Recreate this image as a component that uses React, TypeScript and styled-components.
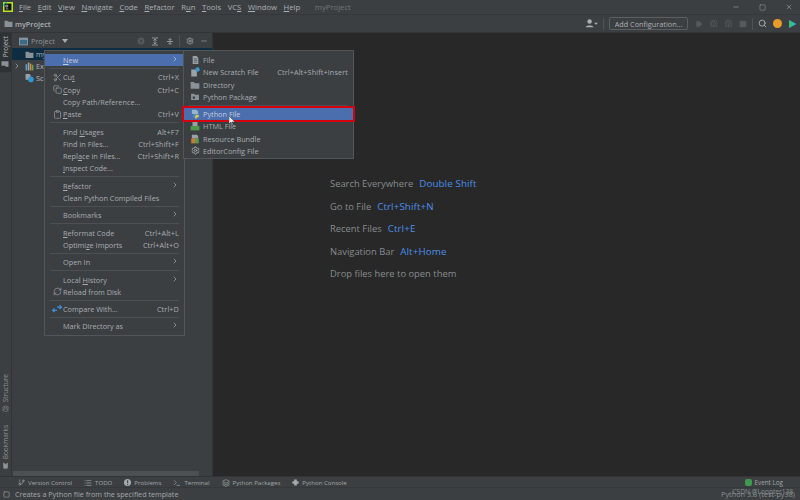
import React from 'react'
import styled, { createGlobalStyle } from 'styled-components'
import { Scissors, Copy, Clipboard, RefreshCw, ChevronRight, Search, X, Minus, Square, Play, Bug, Settings, List, Terminal, GitBranch, Layers, Bookmark } from 'lucide-react'

const Global = createGlobalStyle`
  html, body { margin: 0; padding: 0; background: #2b2b2b; }
  * { box-sizing: border-box; }
`

const Folder = ({ color = '#8a9197', size = 9 }: { color?: string; size?: number }) => (
  <svg width={size} height={size} viewBox="0 0 16 16"><path d="M1 3h5l2 2h7v9H1z" fill={color} /></svg>
)

const FileIcon = () => (
  <svg width="9" height="10" viewBox="0 0 16 16"><path d="M3 1h7l3 3v11H3z" fill="#9aa2a8" /><path d="M5 6h6M5 9h6M5 12h6" stroke="#3c3f41" /></svg>
)

const ScratchIcon = () => (
  <svg width="10" height="10" viewBox="0 0 16 16"><path d="M2 4h7l2 2v9H2z" fill="#9aa2a8" /><circle cx="12" cy="4" r="3.5" fill="#3b97d3" /></svg>
)

const PackageIcon = () => (
  <svg width="10" height="9" viewBox="0 0 16 16"><path d="M1 3h5l2 2h7v9H1z" fill="#8a9197" /><rect x="4" y="8" width="4" height="4" fill="#3c3f41" /></svg>
)

const PythonIcon = () => (
  <svg width="10" height="10" viewBox="0 0 16 16"><path d="M3 1h7l3 3v4H3z" fill="#9ab4c8" /><path d="M6 8h5v3H8v3H5v-4z" fill="#3d8fd1" /><path d="M9 9h5v4h-3v2H8v-3h1z" fill="#e8c545" /></svg>
)

const HtmlIcon = () => (
  <svg width="10" height="10" viewBox="0 0 16 16"><path d="M4 1h8v7H4z" fill="#9aa2a8" /><rect x="1" y="8" width="14" height="7" fill="#4f9a4a" /></svg>
)

const BundleIcon = () => (
  <svg width="10" height="10" viewBox="0 0 16 16"><path d="M3 1h8l2 2v4H3z" fill="#9aa2a8" /><rect x="2" y="7" width="6" height="8" fill="#c77b3a" /><rect x="8" y="7" width="6" height="8" fill="#5c9a4a" /></svg>
)

const CompareIcon = () => (
  <svg width="10" height="10" viewBox="0 0 16 16"><path d="M1 10h7M4 7l-3 3 3 3" stroke="#3f8fd6" strokeWidth="2" fill="none" /><path d="M8 5h7M12 2l3 3-3 3" stroke="#3f8fd6" strokeWidth="2" fill="none" /></svg>
)

const LogoIcon = () => (
  <svg width="10" height="10" viewBox="0 0 16 16">
    <rect width="16" height="16" fill="#b7e224" />
    <path d="M0 4L4 0h3L0 7z" fill="#21d789" />
    <rect x="2.500" y="2.500" width="11" height="11" fill="#111" />
    <path d="M4.500 5h3v3h-3zM4.500 11h4" stroke="#e6e6e6" fill="none" />
  </svg>
)

const PanelIcon = () => (
  <svg width="9" height="9" viewBox="0 0 16 16"><rect x="1" y="2" width="14" height="12" fill="#3d6a85" stroke="#8a9aa5" strokeWidth="1.600" /><rect x="1" y="2" width="14" height="3" fill="#8a9aa5" /></svg>
)

const LibraryIcon = () => (
  <svg width="9" height="9" viewBox="0 0 16 16"><rect x="1" y="4" width="3" height="11" fill="#5ea0c9" /><rect x="5" y="1" width="3" height="14" fill="#9aa2a8" /><rect x="9" y="3" width="2.500" height="12" fill="#c79a3a" /><rect x="12.500" y="5" width="2.500" height="10" fill="#6aa35a" /></svg>
)

const ScratchesIcon = () => (
  <svg width="9" height="10" viewBox="0 0 16 16"><path d="M1 1h7l2 2v8H1z" fill="#9aa2a8" /><circle cx="10.500" cy="10.500" r="5" fill="#2f96d4" /></svg>
)

const CloseCircle = () => (
  <svg width="8" height="8" viewBox="0 0 16 16"><circle cx="8" cy="8" r="7" fill="#55595b" /><path d="M5 5l6 6M11 5l-6 6" stroke="#3c3f41" strokeWidth="1.600" /></svg>
)

const ExpandIcon = () => (
  <svg width="8" height="9" viewBox="0 0 16 16"><path d="M2 1h12M2 15h12M8 4v8M5 6l3-3 3 3M5 10l3 3 3-3" stroke="#a4abb0" strokeWidth="1.600" fill="none" /></svg>
)

const CollapseIcon = () => (
  <svg width="8" height="9" viewBox="0 0 16 16"><path d="M2 8h12M8 1v4M8 11v4M5 3l3 3 3-3M5 13l3-3 3 3" stroke="#a4abb0" strokeWidth="1.600" fill="none" /></svg>
)

const Triangle = () => (
  <svg width="6" height="4" viewBox="0 0 6 4"><path d="M0 0h6L3 4z" fill="#a4abb0" /></svg>
)

const ProblemIcon = () => (
  <svg width="7" height="7" viewBox="0 0 16 16"><circle cx="8" cy="8" r="8" fill="#a4abb0" /><rect x="7" y="3" width="2.500" height="6" fill="#3c3f41" /><rect x="7" y="11" width="2.500" height="2.500" fill="#3c3f41" /></svg>
)

const ConsoleIcon = () => (
  <svg width="7" height="7" viewBox="0 0 16 16"><path d="M5 1h6v4h4v6h-4v4H5v-4H1V5h4z" fill="#a4abb0" /></svg>
)

const Root = styled.div`
  position: relative;
  width: 800px;
  height: 500px;
  overflow: hidden;
  display: flex;
  flex-direction: column;
  background: #3c3f41;
  color: #a4abb0;
  font-family: "Open Sans", "Noto Sans", sans-serif;
  font-size: 7.3px;
`
const TitleBar = styled.div`
  height: 15px;
  flex: none;
  display: flex;
  align-items: center;
  padding-left: 3px;
  border-bottom: 1px solid #35383a;
`
const LogoBox = styled.div`
  display: flex;
  margin-right: 6px;
`
const MenuItem = styled.span`
  margin-right: 6.6px;
  font-size: 7.7px;
  color: #a9b0b5;
`
const ProjectTitle = styled.span`
  margin-left: 8px;
  font-size: 7.7px;
  color: #6f767a;
`
const WindowButtons = styled.div`
  margin-left: auto;
  display: flex;
  align-items: center;
  gap: 19px;
  padding-right: 7px;
  color: #8f9599;
`
const NavBar = styled.div`
  height: 18px;
  flex: none;
  display: flex;
  align-items: center;
  padding-left: 4px;
  gap: 2px;
  font-weight: 600;
  color: #a9b0b5;
  border-bottom: 1px solid #323537;
`
const NavTools = styled.div`
  margin-left: auto;
  display: flex;
  align-items: center;
  font-weight: 400;
  padding-right: 3px;
  gap: 6px;
`
const ToolDivider = styled.span`
  width: 1px;
  height: 12px;
  margin: 0 -1px;
  background: #4e5254;
`
const ConfigButton = styled.div`
  width: 79px;
  height: 13px;
  border: 1px solid #5a5f62;
  border-radius: 2px;
  display: flex;
  align-items: center;
  justify-content: center;
  white-space: nowrap;
  margin-right: 1px;
`
const Badge = styled.span`
  width: 9px;
  height: 9px;
  border-radius: 50%;
  background: #e89b28;
`
const Main = styled.div`
  flex: 1;
  display: flex;
  min-height: 0;
`
const LeftStrip = styled.div`
  width: 12px;
  flex: none;
  display: flex;
  flex-direction: column;
  border-right: 1px solid #323537;
`
const VerticalTab = styled.div<{ $active?: boolean }>`
  writing-mode: vertical-rl;
  transform: rotate(180deg);
  display: flex;
  align-items: center;
  gap: 3px;
  width: 11px;
  padding: 4px 0 3px;
  font-size: 6.5px;
  color: ${p => (p.$active ? '#b4babe' : '#8d9397')};
  background: ${p => (p.$active ? '#2f3234' : 'transparent')};
`
const StripBottom = styled.div`
  margin-top: auto;
  display: flex;
  flex-direction: column;
  gap: 6px;
  padding-bottom: 3px;
`
const ProjectPanel = styled.div`
  width: 201px;
  flex: none;
  display: flex;
  flex-direction: column;
  border-right: 1px solid #323537;
`
const PanelHeader = styled.div`
  height: 15px;
  flex: none;
  display: flex;
  align-items: center;
  padding: 1px 4px 0 7px;
  gap: 3px;
  color: #8f969a;
  font-size: 7.3px;
`
const HeaderArrow = styled.span`
  display: flex;
  margin-left: 4px;
`
const PanelIcons = styled.div`
  margin-left: auto;
  display: flex;
  align-items: center;
  gap: 6.5px;
  color: #9aa1a5;
`
const TreeRow = styled.div<{ $selected?: boolean }>`
  height: 12px;
  flex: none;
  display: flex;
  align-items: center;
  gap: 2px;
  padding-left: 1px;
  background: ${p => (p.$selected ? '#0f2d42' : 'transparent')};
  color: #b0b6ba;
`
const TreeArrow = styled.span`
  width: 10px;
  display: flex;
`
const PanelScroll = styled.div`
  margin-top: auto;
  height: 5px;
  width: 186px;
  margin-left: 1px;
  flex: none;
  background: #4d5052;
`
const Editor = styled.div`
  flex: 1;
  background: #282828;
  display: flex;
  flex-direction: column;
  gap: 12.5px;
  padding: 146px 0 0 117px;
  font-size: 9.4px;
  color: #868b8e;
`
const Hint = styled.div`
  display: flex;
  gap: 6px;
  height: 10px;
  line-height: 10px;
  b { font-weight: 400; font-size: 9.8px; letter-spacing: 0.1px; color: #4a8ee8; }
`
const ToolBar = styled.div`
  height: 12px;
  flex: none;
  display: flex;
  align-items: center;
  padding: 1px 0 0 18px;
  gap: 12px;
  border-top: 1px solid #323537;
  border-bottom: 1px solid #35383a;
  color: #a0a6aa;
  font-size: 6.1px;
`
const ToolItem = styled.span`
  display: flex;
  align-items: center;
  gap: 3px;
`
const EventLog = styled(ToolItem)`
  margin-left: auto;
  padding-right: 17px;
  font-size: 6.3px;
`
const EventBadge = styled.span`
  width: 7px;
  height: 7px;
  border-radius: 2px;
  background: #3f9a50;
`
const StatusBar = styled.div`
  height: 12px;
  flex: none;
  display: flex;
  align-items: center;
  padding-left: 3px;
  gap: 5px;
  font-size: 7.2px;
  color: #a0a6aa;
`
const StatusRight = styled.span`
  margin-left: auto;
  padding-right: 5px;
  font-size: 7.3px;
  color: #8a9094;
`
const Watermark = styled.span`
  position: absolute;
  right: 7px;
  bottom: 4px;
  font-size: 6.6px;
  color: #888d90;
`
const Row = styled.div<{ $active?: boolean }>`
  height: 12.25px;
  flex: none;
  display: flex;
  align-items: center;
  padding: 0 5px 0 6px;
  white-space: nowrap;
  background: ${p => (p.$active ? '#4b6eaf' : 'transparent')};
  color: ${p => (p.$active ? '#c3cbd6' : 'inherit')};
  u { text-underline-offset: 1px; text-decoration-thickness: 0.5px; }
`
const RowIcon = styled.span`
  width: 12px;
  flex: none;
  display: flex;
  align-items: center;
  justify-content: center;
`
const Shortcut = styled.span`
  margin-left: auto;
  letter-spacing: 0.1px;
`
const Separator = styled.div`
  height: 5.1px;
  flex: none;
  display: flex;
  align-items: center;
  padding: 0 5px;
  &::after {
    content: '';
    flex: 1;
    height: 1px;
    background: #4c5052;
  }
`
const Popup = styled.div`
  position: absolute;
  display: flex;
  flex-direction: column;
  background: #3c3f41;
  border: 1px solid #515658;
  padding: 3px 0;
  color: #a6adb2;
`
const ContextMenu = styled(Popup)`
  left: 44px;
  top: 50px;
  width: 141px;
  height: 286px;
`
const SubMenu = styled(Popup)`
  left: 183px;
  top: 50px;
  width: 171px;
  height: 109px;
  ${Row} { padding-left: 5px; }
  ${RowIcon} { margin-right: 2px; }
`
const Highlight = styled.div`
  position: absolute;
  left: 182px;
  top: 106px;
  width: 173px;
  height: 16px;
  border: 2px solid #d4020f;
`
const Cursor = styled.svg`
  position: absolute;
  left: 229px;
  top: 116px;
`

// '&' marks the mnemonic letter, drawn underlined
const Mnemonic = ({ text }: { text: string }) => {
  const i = text.indexOf('&')
  if (i < 0) return <>{text}</>
  return <>{text.slice(0, i)}<u>{text[i + 1]}</u>{text.slice(i + 2)}</>
}

type MenuEntry = { label?: string; shortcut?: string; arrow?: boolean; icon?: React.ReactNode; active?: boolean }

const ic = { size: 9, strokeWidth: 1.6 }

const contextItems: MenuEntry[] = [
  { label: '&New', arrow: true, active: true },
  {},
  { label: 'Cu&t', shortcut: 'Ctrl+X', icon: <Scissors {...ic} /> },
  { label: '&Copy', shortcut: 'Ctrl+C', icon: <Copy {...ic} /> },
  { label: 'Copy Path/Reference...' },
  { label: '&Paste', shortcut: 'Ctrl+V', icon: <Clipboard {...ic} /> },
  {},
  { label: 'Find &Usages', shortcut: 'Alt+F7' },
  { label: 'Find in Files...', shortcut: 'Ctrl+Shift+F' },
  { label: 'Repl&ace in Files...', shortcut: 'Ctrl+Shift+R' },
  { label: '&Inspect Code...' },
  {},
  { label: '&Refactor', arrow: true },
  { label: 'Clean Python Compiled Files' },
  {},
  { label: 'Bookmarks', arrow: true },
  {},
  { label: '&Reformat Code', shortcut: 'Ctrl+Alt+L' },
  { label: 'Optimi&ze Imports', shortcut: 'Ctrl+Alt+O' },
  {},
  { label: 'Open In', arrow: true },
  {},
  { label: 'Local &History', arrow: true },
  { label: 'Reload from Disk', icon: <RefreshCw {...ic} /> },
  {},
  { label: 'Compare With...', shortcut: 'Ctrl+D', icon: <CompareIcon /> },
  {},
  { label: 'Mark Directory as', arrow: true },
]

const subItems: MenuEntry[] = [
  { label: 'File', icon: <FileIcon /> },
  { label: 'New Scratch File', shortcut: 'Ctrl+Alt+Shift+Insert', icon: <ScratchIcon /> },
  { label: 'Directory', icon: <Folder size={10} /> },
  { label: 'Python Package', icon: <PackageIcon /> },
  {},
  { label: 'Python File', icon: <PythonIcon />, active: true },
  { label: 'HTML File', icon: <HtmlIcon /> },
  { label: 'Resource Bundle', icon: <BundleIcon /> },
  { label: 'EditorConfig File', icon: <Settings size={9} strokeWidth={2.4} /> },
]

const renderItems = (items: MenuEntry[]) =>
  items.map((item, i) =>
    item.label ? (
      <Row key={i} $active={item.active}>
        <RowIcon>{item.icon}</RowIcon>
        <span><Mnemonic text={item.label} /></span>
        {item.shortcut && <Shortcut>{item.shortcut}</Shortcut>}
        {item.arrow && <Shortcut><ChevronRight size={8} /></Shortcut>}
      </Row>
    ) : (
      <Separator key={i} />
    )
  )

const menus = ['&File', '&Edit', '&View', '&Navigate', '&Code', '&Refactor', 'R&un', '&Tools', 'VC&S', '&Window', '&Help']

const App = () => {
  return (
    <Root>
      <Global />
      <TitleBar>
        <LogoBox><LogoIcon /></LogoBox>
        {menus.map(m => <MenuItem key={m}><Mnemonic text={m} /></MenuItem>)}
        <ProjectTitle>myProject</ProjectTitle>
        <WindowButtons>
          <Minus size={8} />
          <Square size={7} />
          <X size={8} />
        </WindowButtons>
      </TitleBar>
      <NavBar>
        <Folder size={9} />
        myProject
        <NavTools>
          <svg width="13" height="9" viewBox="0 0 20 14"><circle cx="7" cy="4" r="3.5" fill="#a9b0b5" /><path d="M1 13c0-4 12-4 12 0zM14 6h6l-3 3z" fill="#a9b0b5" /></svg>
          <ToolDivider />
          <ConfigButton>Add Configuration...</ConfigButton>
          <Play size={8} color="#55595b" fill="#55595b" />
          <Bug size={9} color="#55595b" />
          <Bug size={9} color="#55595b" />
          <Square size={8} color="#55595b" fill="#55595b" />
          <ToolDivider />
          <Search size={9} color="#b0b6ba" strokeWidth={2.2} />
          <Badge />
          <svg width="9" height="10" viewBox="0 0 16 16"><path d="M2 1l13 7-13 7z" fill="#2fb2c9" /><path d="M2 1l7 7-7 7z" fill="#35c46a" /></svg>
        </NavTools>
      </NavBar>
      <Main>
        <LeftStrip>
          <VerticalTab $active><Folder size={8} />Project</VerticalTab>
          <StripBottom>
            <VerticalTab><Layers size={7} />Structure</VerticalTab>
            <VerticalTab><Bookmark size={7} fill="currentColor" />Bookmarks</VerticalTab>
          </StripBottom>
        </LeftStrip>
        <ProjectPanel>
          <PanelHeader>
            <PanelIcon />
            Project
            <HeaderArrow><Triangle /></HeaderArrow>
            <PanelIcons>
              <CloseCircle />
              <ExpandIcon />
              <CollapseIcon />
              <ToolDivider />
              <Settings size={8} strokeWidth={2.4} />
              <Minus size={8} />
            </PanelIcons>
          </PanelHeader>
          <TreeRow $selected><TreeArrow /><Folder size={9} />myProject</TreeRow>
          <TreeRow><TreeArrow><ChevronRight size={8} /></TreeArrow><LibraryIcon />External Libraries</TreeRow>
          <TreeRow><TreeArrow /><ScratchesIcon />Scratches</TreeRow>
          <PanelScroll />
        </ProjectPanel>
        <Editor>
          <Hint>Search Everywhere <b>Double Shift</b></Hint>
          <Hint>Go to File <b>Ctrl+Shift+N</b></Hint>
          <Hint>Recent Files <b>Ctrl+E</b></Hint>
          <Hint>Navigation Bar <b>Alt+Home</b></Hint>
          <Hint>Drop files here to open them</Hint>
        </Editor>
      </Main>
      <ToolBar>
        <ToolItem><GitBranch size={7} />Version Control</ToolItem>
        <ToolItem><List size={8} />TODO</ToolItem>
        <ToolItem><ProblemIcon />Problems</ToolItem>
        <ToolItem><Terminal size={8} />Terminal</ToolItem>
        <ToolItem><Layers size={8} />Python Packages</ToolItem>
        <ToolItem><ConsoleIcon />Python Console</ToolItem>
        <EventLog><EventBadge />Event Log</EventLog>
      </ToolBar>
      <StatusBar>
        <Square size={7} />
        Creates a Python file from the specified template
        <StatusRight>Python 3.8 (test-py38)</StatusRight>
      </StatusBar>
      <Watermark>CSDN @Loopter138</Watermark>
      <ContextMenu>{renderItems(contextItems)}</ContextMenu>
      <SubMenu>{renderItems(subItems)}</SubMenu>
      <Highlight />
      <Cursor width="6" height="9" viewBox="0 0 6 9"><path d="M0 0v8l2-2 1 3 1-.5-1-2.500h3z" fill="#eee" stroke="#222" strokeWidth=".4" /></Cursor>
    </Root>
  )
}

export default App
